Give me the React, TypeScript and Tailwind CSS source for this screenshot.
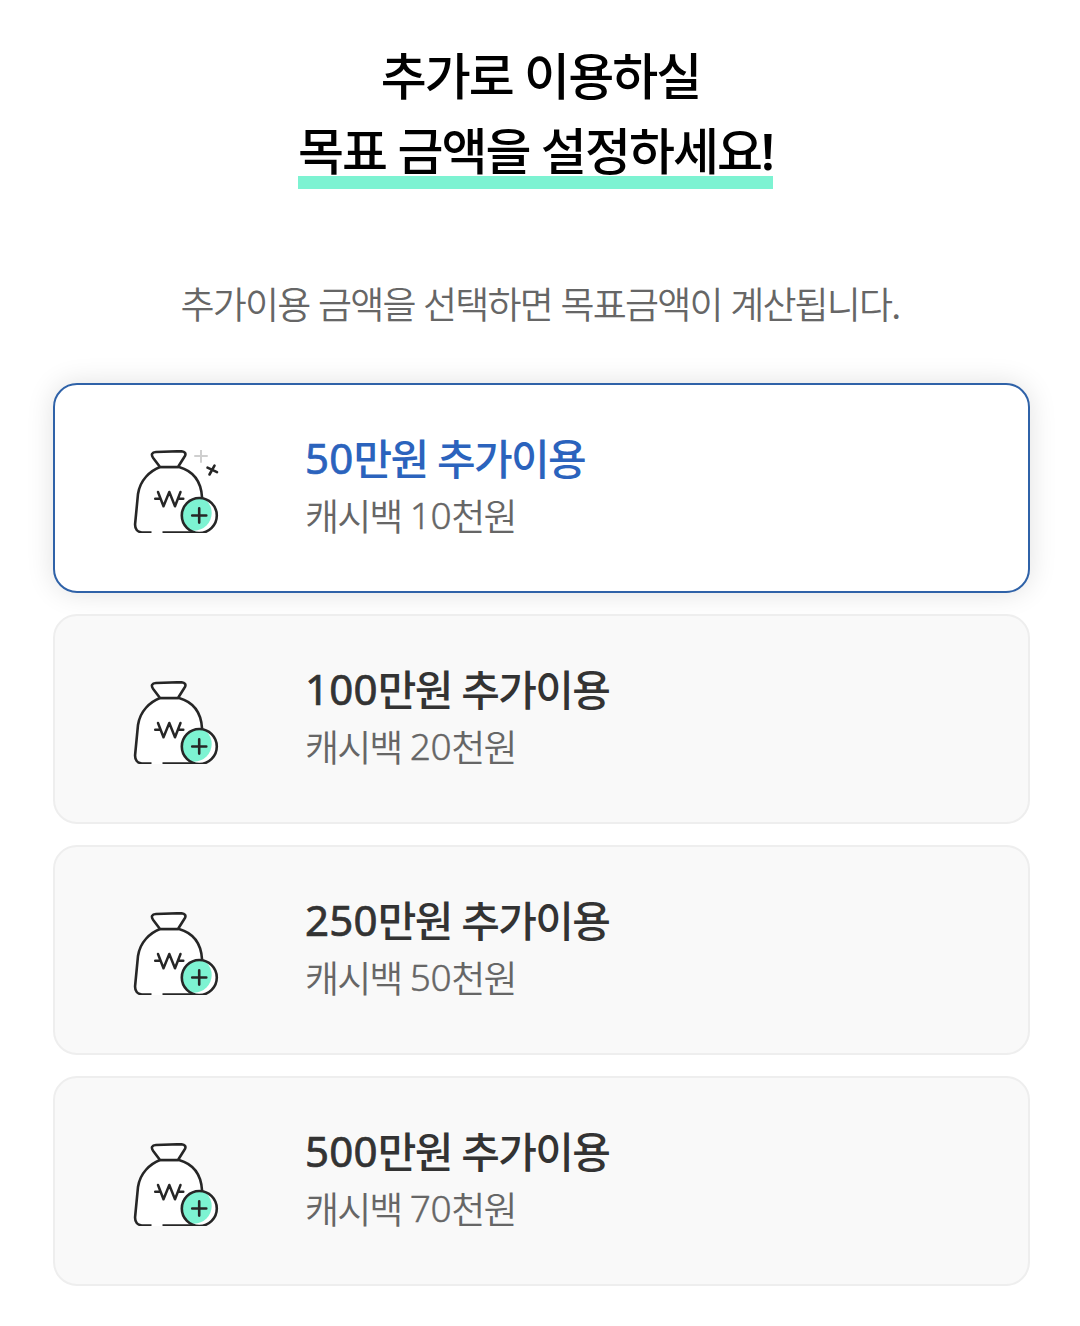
import React, { useState } from 'react';
import clsx from 'clsx';

interface Plan {
  id: number;
  cashback: number;
}

const PLANS: Plan[] = [
  { id: 50, cashback: 10 },
  { id: 100, cashback: 20 },
  { id: 250, cashback: 50 },
  { id: 500, cashback: 70 },
];

const MoneyBagIcon: React.FC<{ sparkle: boolean }> = ({ sparkle }) => (
  <svg
    viewBox="0 0 86 83"
    className="mt-[7px] h-[83px] w-[86px] shrink-0"
    fill="none"
    stroke="#262626"
    strokeWidth="2.6"
    strokeLinecap="round"
  >
    {/* bag */}
    <path
      d="M27 17C17 21 7 30 5 44L2.2 73C1.5 79 4 83 11 83H54L75 75L70 46C68 31 60 21 46 17Z"
      fill="#fff"
      stroke="none"
    />
    <path
      d="M18.5 82.5H11C4 82.5 1.5 79 2.2 73L5 44C7 30 17 21 27 17H46C60 21 68 31 69 47M29.5 82.5H66"
      strokeLinecap="butt"
    />
    <path
      d="M27 17L20.2 8C17.7 4.5 19 2.2 23 2L47 1.2C52 1.2 53.8 3.5 51.3 7L45 17Z"
      strokeLinejoin="round"
      fill="#fff"
    />
    {/* won sign */}
    <path
      d="M25 42L30.5 56.3L36.3 42L42 56.3L47.5 42M22.2 48.7H27M46 48.7H50.3"
      strokeWidth="2.5"
      strokeLinejoin="round"
    />
    {/* plus badge */}
    <clipPath id="badge">
      <circle cx="66.3" cy="65.5" r="17.5" />
    </clipPath>
    <circle cx="66.3" cy="65.5" r="17.5" fill="#fff" stroke="none" />
    <circle cx="61" cy="63" r="17.7" fill="#7df3d2" stroke="none" clipPath="url(#badge)" />
    <circle cx="66.3" cy="65.5" r="17.5" />
    <path d="M59.2 65.5H73.3M66.2 58.4V72.6" />
    {sparkle && (
      <>
        <path d="M62 6H74M68 0.5V12" stroke="#cfcfcf" strokeWidth="2" />
        <path d="M74.5 17.7L84 22.2M81.5 15.7L76.5 24.5" />
      </>
    )}
  </svg>
);

export default function App() {
  const [selected, setSelected] = useState(50);

  return (
    <main className="flex h-[1326px] w-[1080px] flex-col overflow-hidden bg-white px-[53px] font-['Noto_Sans_CJK_KR',sans-serif]">
      <h1 className="mt-[36px] flex flex-col items-center text-[50px] leading-[75px] font-medium tracking-[-1.95px] text-black [word-spacing:2px]">
        <span className="ml-px">추가로 이용하실</span>
        <span className="mr-[9px] h-[78px] border-b-[13px] border-[#7df3d2]">
          목표 금액을 설정하세요
          <span className="font-['Noto_Sans'] font-semibold">!</span>
        </span>
      </h1>

      <p className="mt-[89px] text-center text-[37px] leading-[50px] font-[350] tracking-[-1.8px] whitespace-nowrap text-[#666] [word-spacing:2px]">
        추가이용 금액을 선택하면 목표금액이 계산됩니다.
      </p>

      <div className="mt-[55px] flex w-[977px] flex-col gap-[21px]">
        {PLANS.map((plan) => {
          const active = plan.id === selected;
          return (
            <button
              key={plan.id}
              onClick={() => setSelected(plan.id)}
              className={clsx(
                'flex h-[210px] cursor-pointer items-center rounded-[24px] border-2 pl-[78px] text-left',
                active
                  ? 'border-[#2f62a8] bg-white shadow-[0_0_28px_rgba(0,0,0,0.12)]'
                  : 'border-[#eee] bg-[#f9f9f9]',
              )}
            >
              <MoneyBagIcon sparkle={active} />
              <span className="ml-[86px] flex flex-col pb-[8px] whitespace-nowrap">
                <span
                  className={clsx(
                    'text-[42px] leading-[61px] font-medium tracking-[-1.7px] [word-spacing:2px]',
                    active ? 'text-[#2b63bd]' : 'text-[#333]',
                  )}
                >
                  <span className="align-[1px] font-['Noto_Sans'] leading-none font-normal tracking-[0.2px] [-webkit-text-stroke:0.7px_currentColor]">
                    {plan.id}
                  </span>
                  만원 추가이용
                </span>
                <span className="text-[37px] leading-[56px] font-[350] tracking-[-1.9px] text-[#666] [word-spacing:2px]">
                  캐시백{' '}
                  <span className="align-[2px] font-['Noto_Sans'] leading-none font-light tracking-[-0.4px] [-webkit-text-stroke:0.4px_currentColor]">
                    {plan.cashback}
                  </span>
                  천원
                </span>
              </span>
            </button>
          );
        })}
      </div>
    </main>
  );
}
